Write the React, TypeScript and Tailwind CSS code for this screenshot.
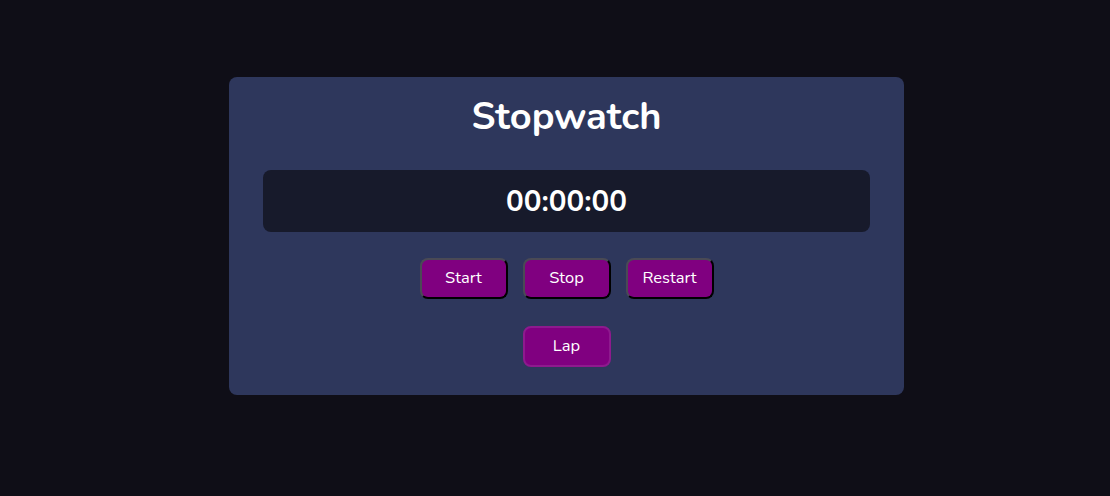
const font = { fontFamily: '"Nunito", "Lato", "Open Sans", sans-serif' };

function Btn({ label, lap }: { label: string; lap?: boolean }) {
  return (
    <button
      className={
        lap
          ? "w-[88px] h-[41px] rounded-[8px] bg-[#800080] text-white text-[16.5px] border-2 border-[#8e1a8e]"
          : "w-[88px] h-[41px] rounded-[8px] bg-[#800080] text-white text-[16.5px] border-2 border-t-[#4a4a55] border-l-[#4a4a55] border-b-black border-r-black"
      }
    >
      {label}
    </button>
  );
}

export default function App() {
  return (
    <div
      className="w-[1110px] h-[496px] bg-[#0f0e17] flex justify-center pt-[77px] pl-[23px]"
      style={font}
    >
      <div className="w-[675px] h-[318px] bg-[#2e375c] rounded-[8px] flex flex-col items-center">
        <h1 className="text-white text-[38px] font-bold leading-none mt-[16px] h-[48px] flex items-center">
          Stopwatch
        </h1>
        <div className="mt-[29px] w-[607px] h-[62px] rounded-[8px] bg-[#171a2b] flex items-center justify-center">
          <span className="text-white text-[29.5px] font-bold">00:00:00</span>
        </div>
        <div className="flex gap-[15px] mt-[26px]">
          <Btn label="Start" />
          <Btn label="Stop" />
          <Btn label="Restart" />
        </div>
        <div className="mt-[27px]">
          <Btn label="Lap" lap />
        </div>
      </div>
    </div>
  );
}
